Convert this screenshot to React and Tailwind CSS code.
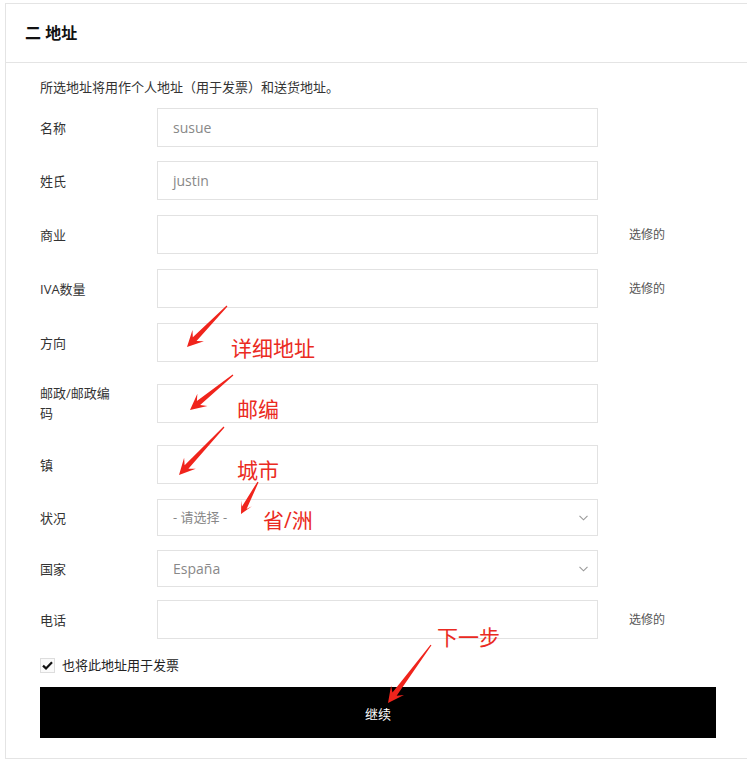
import React from 'react';

const cjk = { fontFamily: '"Open Sans", "Noto Sans CJK SC", sans-serif' };

function Arrow({ from, to, head = 16, width = 8 }) {
  const [x1, y1] = from;
  const [x2, y2] = to;
  const dx = x2 - x1;
  const dy = y2 - y1;
  const len = Math.hypot(dx, dy);
  const ux = dx / len;
  const uy = dy / len;
  const nx = -uy;
  const ny = ux;
  const bx = x2 - ux * head;
  const by = y2 - uy * head;
  const cx = x2 - ux * (head - 5);
  const cy = y2 - uy * (head - 5);
  const pts = [
    [x1 + nx * 0.6, y1 + ny * 0.6],
    [cx + nx * 2.6, cy + ny * 2.6],
    [bx + nx * width, by + ny * width],
    [x2, y2],
    [bx - nx * width, by - ny * width],
    [cx - nx * 2.6, cy - ny * 2.6],
    [x1 - nx * 0.6, y1 - ny * 0.6],
  ];
  return <polygon points={pts.map((p) => p.join(',')).join(' ')} fill="#f0241c" />;
}

function Row({ label, optional, className = '', children }) {
  return (
    <div className={`flex items-center ${className}`}>
      <div className="w-[117px] shrink-0">
        <div className="max-w-[82px] text-[13px] leading-[20px] text-[#333]">{label}</div>
      </div>
      {children}
      {optional && <span className="ml-[31px] text-[12px] text-[#555]">选修的</span>}
    </div>
  );
}

function Field({ value }) {
  return (
    <div className="w-[441px] h-[39px] border border-[#e2e2e2] flex items-center pl-[15px] text-[14px] text-[#888]">
      {value}
    </div>
  );
}

function Select({ value, small }) {
  return (
    <div className="w-[441px] h-[37px] border border-[#e2e2e2] flex items-center justify-between pl-[15px] pr-[9px] text-[#888]">
      <span className={small ? 'text-[13px]' : 'text-[14px]'}>{value}</span>
      <svg width="9" height="6" viewBox="0 0 9 6" fill="none" stroke="#999" strokeWidth="1.1">
        <path d="M0.5 0.8 L4.5 4.8 L8.5 0.8" />
      </svg>
    </div>
  );
}

export default function App() {
  return (
    <div className="relative w-[747px] h-[760px] overflow-hidden bg-white" style={cjk}>
      <div className="pl-[5px] pt-[3px]">
        <div className="w-[746px] h-[756px] border border-[#e4e4e4]">
          <div className="h-[59px] border-b border-[#e4e4e4] flex items-center pl-[19px]">
            <h2 className="text-[16px] font-bold text-[#111]">二 地址</h2>
          </div>
          <div className="pl-[34px] pr-[34px] pt-[14px]">
            <p className="text-[13px] leading-[20px] text-[#333]">所选地址将用作个人地址（用于发票）和送货地址。</p>

            <Row label="名称" className="mt-[11px]">
              <Field value="susue" />
            </Row>
            <Row label="姓氏" className="mt-[14px]">
              <Field value="justin" />
            </Row>
            <Row label="商业" optional className="mt-[15px]">
              <Field />
            </Row>
            <Row label="IVA数量" optional className="mt-[15px]">
              <Field />
            </Row>
            <Row label="方向" className="mt-[15px]">
              <Field />
            </Row>
            <Row label="邮政/邮政编码" className="mt-[21px]">
              <Field />
            </Row>
            <Row label="镇" className="mt-[22px]">
              <Field />
            </Row>
            <Row label="状况" className="mt-[15px]">
              <Select value="- 请选择 -" small />
            </Row>
            <Row label="国家" className="mt-[14px]">
              <Select value="España" />
            </Row>
            <Row label="电话" optional className="mt-[13px]">
              <Field />
            </Row>

            <label className="mt-[17px] flex items-center gap-[7px] text-[13px] text-[#222]">
              <span className="w-[15px] h-[15px] border border-[#ddd] bg-[#fafafa] flex items-center justify-center">
                <svg width="11" height="9" viewBox="0 0 11 9">
                  <path d="M1 4.6 L4 7.4 L10 1.2" fill="none" stroke="#111" strokeWidth="2.2" />
                </svg>
              </span>
              也将此地址用于发票
            </label>

            <button className="mt-[11px] w-full h-[51px] pt-[6px] bg-black text-white text-[13px]">继续</button>
          </div>
        </div>
      </div>

      <svg className="absolute inset-0 pointer-events-none" width="747" height="760">
        <Arrow from={[227, 306]} to={[187, 347]} />
        <Arrow from={[233, 375]} to={[190, 410]} />
        <Arrow from={[224, 427]} to={[179, 475]} />
        <Arrow from={[258, 482]} to={[241, 514]} head={12} width={6} />
        <Arrow from={[431, 645]} to={[388, 703]} />
      </svg>
      <div className="absolute left-[231px] top-[334px] text-[21px] leading-[28px] text-[#ea2a22]">详细地址</div>
      <div className="absolute left-[237px] top-[395px] text-[21px] leading-[28px] text-[#ea2a22]">邮编</div>
      <div className="absolute left-[237px] top-[456px] text-[21px] leading-[28px] text-[#ea2a22]">城市</div>
      <div className="absolute left-[263px] top-[506px] text-[21px] leading-[28px] text-[#ea2a22]">省/洲</div>
      <div className="absolute left-[437px] top-[623px] text-[21px] leading-[28px] text-[#ea2a22]">下一步</div>
    </div>
  );
}
